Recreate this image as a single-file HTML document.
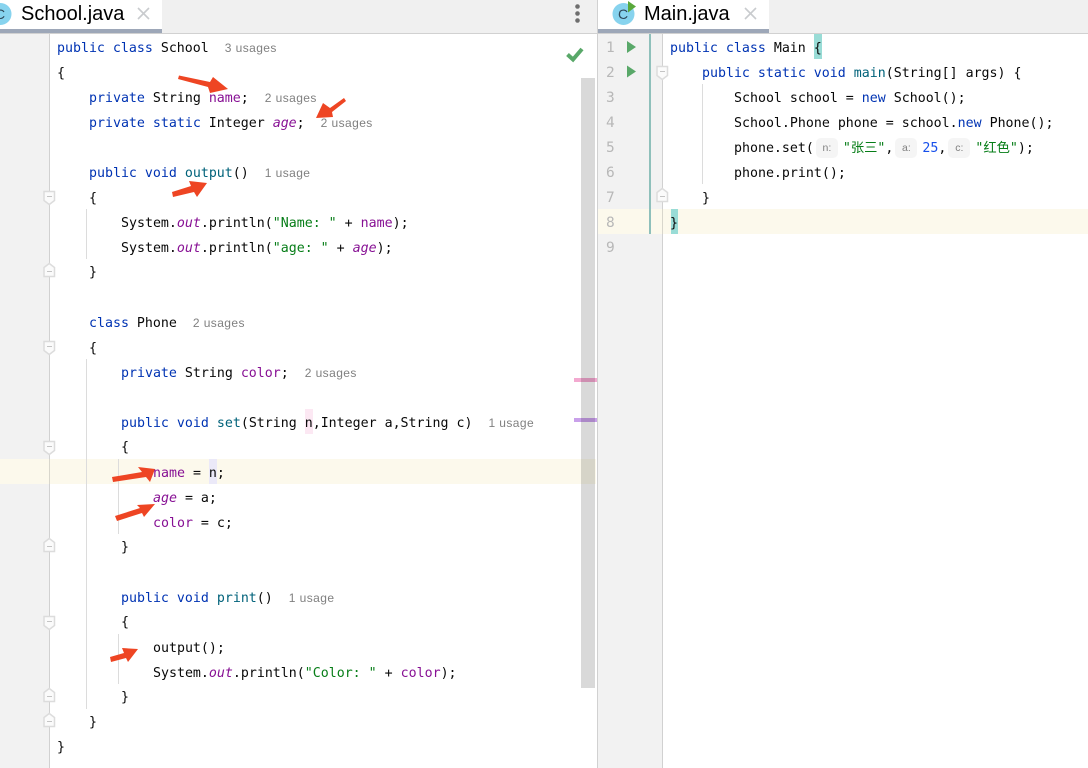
<!DOCTYPE html>
<html><head><meta charset="utf-8"><style>
html,body{margin:0;padding:0;width:1088px;height:768px;overflow:hidden;background:#fff}
.a{position:absolute}
.l{position:absolute;margin-top:1px;height:25px;line-height:25px;white-space:pre;font-family:"DejaVu Sans Mono","Noto Sans CJK SC",monospace;font-size:13.28px;color:#080808}
.k{color:#0033b3}.f{color:#00627a}.v{color:#871094}.i{font-style:italic}.s{color:#067d17}.n{color:#1750eb}
.u{font-family:"Liberation Sans",sans-serif;font-size:12px;color:#808080;letter-spacing:.42px;margin-left:8px}
.p{display:inline-block;font-family:"Liberation Sans",sans-serif;font-size:10.5px;line-height:20px;height:20px;width:22px;text-align:center;background:#f5f5f5;color:#808080;border-radius:5px;vertical-align:middle;margin:0 5px 1px 2px}
.t{font-family:"Liberation Sans",sans-serif;font-size:20px;color:#000}
.g{position:absolute;margin-top:1px;font-family:"DejaVu Sans Mono",monospace;font-size:14.5px;color:#b8b8b8;line-height:25px;height:25px}
</style></head><body>
<div class="a" style="left:0;top:0;width:1088px;height:33px;background:#f0f0f0"></div>
<div class="a" style="left:0;top:33px;width:1088px;height:1px;background:#d1d1d1"></div>
<div class="a" style="left:0;top:0;width:162px;height:29px;background:#fff"></div>
<div class="a" style="left:0;top:29px;width:162px;height:4px;background:#9da7b8"></div>
<div class="a" style="left:598px;top:0;width:171px;height:29px;background:#fff"></div>
<div class="a" style="left:598px;top:29px;width:171px;height:4px;background:#9da7b8"></div>

<div class="a" style="left:0;top:34px;width:49px;height:734px;background:#f2f2f2"></div>
<div class="a" style="left:49px;top:34px;width:1px;height:734px;background:#d1d1d1"></div>
<div class="a" style="left:598px;top:34px;width:64px;height:734px;background:#f2f2f2"></div>
<div class="a" style="left:597px;top:0;width:1px;height:768px;background:#d1d1d1"></div>
<div class="a" style="left:662px;top:34px;width:1px;height:734px;background:#d1d1d1"></div>

<div class="a" style="left:0;top:459px;width:596px;height:25px;background:#fcf9ec"></div>
<div class="a" style="left:598px;top:209px;width:490px;height:25px;background:#fcf9ec"></div>
<div class="a" style="left:49px;top:459px;width:1px;height:25px;background:#d8d6cc"></div>
<div class="a" style="left:649px;top:34px;width:2px;height:200px;background:#8fc0bb"></div>
<div class="a" style="left:662px;top:209px;width:1px;height:25px;background:#d8d6cc"></div>

<div class="a" style="left:814px;top:34px;width:8px;height:25px;background:#99dcd6"></div>
<div class="a" style="left:671px;top:209px;width:7px;height:25px;background:#99dcd6"></div>
<div class="a" style="left:305px;top:409px;width:8px;height:25px;background:#fce8f3"></div>
<div class="a" style="left:209px;top:459px;width:8px;height:25px;background:#ebe9f8"></div>

<div class="a" style="left:86px;top:209px;width:1px;height:50px;background:#dcdcdc"></div>
<div class="a" style="left:86px;top:359px;width:1px;height:350px;background:#dcdcdc"></div>
<div class="a" style="left:118px;top:459px;width:1px;height:75px;background:#dcdcdc"></div>
<div class="a" style="left:118px;top:634px;width:1px;height:50px;background:#dcdcdc"></div>
<div class="a" style="left:702px;top:84px;width:1px;height:100px;background:#dcdcdc"></div>

<div class="a" style="left:574px;top:378px;width:23px;height:4px;background:#f3a9d0"></div>
<div class="a" style="left:574px;top:418px;width:23px;height:4px;background:#c9a0ea"></div>
<div class="a" style="left:581px;top:78px;width:14px;height:610px;background:rgba(0,0,0,.15)"></div>

<svg class="a" style="left:0;top:0" width="1088" height="768" viewBox="0 0 1088 768">
<circle cx="0.500" cy="14" r="11" fill="#87d3ee"/>
<circle cx="623.500" cy="14" r="11" fill="#87d3ee"/>
<path d="M628 1l8 5.500-8 6z" fill="#59a83b"/>
<circle cx="577.500" cy="6.500" r="2.300" fill="#6e6e6e"/><circle cx="577.500" cy="13.500" r="2.300" fill="#6e6e6e"/><circle cx="577.500" cy="20.500" r="2.300" fill="#6e6e6e"/>
<path d="M138 8l11 11M149 8l-11 11M745 8l11 11M756 8l-11 11" stroke="#c9cbce" stroke-width="1.600" fill="none"/>
<path d="M567.500 54.500l5.500 5 9-10.500" stroke="#59a869" stroke-width="4" fill="none"/>
<path d="M627 41l9 6-9 6zM627 65.500l9 6-9 6z" fill="#59a869"/>
<g fill="#fbfbfb" stroke="#dcdcdc" stroke-width="1.500">
<path d="M44 191.500h10.500v9l-5.250 4-5.250-4z"/><path d="M44 276.500h10.500v-9l-5.250-4-5.250 4z"/>
<path d="M44 341.500h10.500v9l-5.250 4-5.250-4z"/><path d="M44 441.500h10.500v9l-5.250 4-5.250-4z"/>
<path d="M44 551.500h10.500v-9l-5.250-4-5.250 4z"/><path d="M44 616.500h10.500v9l-5.250 4-5.250-4z"/>
<path d="M44 701.500h10.500v-9l-5.250-4-5.250 4z"/><path d="M44 726.500h10.500v-9l-5.250-4-5.250 4z"/>
<path d="M657 66.500h10.500v9l-5.250 4-5.250-4z"/><path d="M657 201.500h10.500v-9l-5.250-4-5.250 4z"/>
</g>
<path d="M47 196.500h5M47 271.500h5M47 346.500h5M47 446.500h5M47 546.500h5M47 621.500h5M47 696.500h5M47 721.500h5M660 71.500h5M660 196.500h5" stroke="#c4c4c4" fill="none"/>
<g fill="#ee4523">
<polygon points="179,75.500 210,82 213,77 228,89 210,93 208,87 178,79"/>
<polygon points="344,98 330,108 323,103 316,118 333,117 332,112 346,101"/>
<polygon points="172,192 191,186 189,181 207,183 197,197 194,192 173,197"/>
<polygon points="112,477 142,472 138,467 155,469 150,482 146,477 113,482"/>
<polygon points="115,516 140,508 137,505 155,504 144,517 142,513 117,521"/>
<polygon points="110,657 124,653 122,648 138,649 128,662 126,658 111,662"/>
</g>
</svg>
<div class="a" style="left:-5px;top:6px;width:12px;font:14px 'Liberation Sans',sans-serif;color:#2f4858">C</div>
<div class="a" style="left:618px;top:6px;font:14px 'Liberation Sans',sans-serif;color:#2f4858">C</div>
<div class="a t" style="left:21px;top:3px">School.java</div>
<div class="a t" style="left:644px;top:3px">Main.java</div>

<div class="g" style="left:606px;top:35px">1</div><div class="g" style="left:606px;top:60px">2</div><div class="g" style="left:606px;top:85px">3</div><div class="g" style="left:606px;top:110px">4</div><div class="g" style="left:606px;top:135px">5</div><div class="g" style="left:606px;top:160px">6</div><div class="g" style="left:606px;top:185px">7</div><div class="g" style="left:606px;top:210px">8</div><div class="g" style="left:606px;top:235px">9</div>

<div class="l" style="left:57px;top:35px"><span class="k">public class</span> School <span class="u">3 usages</span></div>
<div class="l" style="left:57px;top:60px">{</div>
<div class="l" style="left:89px;top:85px"><span class="k">private</span> String <span class="v">name</span>; <span class="u">2 usages</span></div>
<div class="l" style="left:89px;top:110px"><span class="k">private static</span> Integer <span class="v i">age</span>; <span class="u">2 usages</span></div>
<div class="l" style="left:89px;top:160px"><span class="k">public void</span> <span class="f">output</span>() <span class="u">1 usage</span></div>
<div class="l" style="left:89px;top:185px">{</div>
<div class="l" style="left:121px;top:210px">System.<span class="v i">out</span>.println(<span class="s">"Name: "</span> + <span class="v">name</span>);</div>
<div class="l" style="left:121px;top:235px">System.<span class="v i">out</span>.println(<span class="s">"age: "</span> + <span class="v i">age</span>);</div>
<div class="l" style="left:89px;top:259px">}</div>
<div class="l" style="left:89px;top:310px"><span class="k">class</span> Phone <span class="u">2 usages</span></div>
<div class="l" style="left:89px;top:335px">{</div>
<div class="l" style="left:121px;top:360px"><span class="k">private</span> String <span class="v">color</span>; <span class="u">2 usages</span></div>
<div class="l" style="left:121px;top:410px"><span class="k">public void</span> <span class="f">set</span>(String n,Integer a,String c) <span class="u">1 usage</span></div>
<div class="l" style="left:121px;top:434px">{</div>
<div class="l" style="left:153px;top:460px"><span class="v">name</span> = n;</div>
<div class="l" style="left:153px;top:485px"><span class="v i">age</span> = a;</div>
<div class="l" style="left:153px;top:510px"><span class="v">color</span> = c;</div>
<div class="l" style="left:121px;top:534px">}</div>
<div class="l" style="left:121px;top:585px"><span class="k">public void</span> <span class="f">print</span>() <span class="u">1 usage</span></div>
<div class="l" style="left:121px;top:609px">{</div>
<div class="l" style="left:153px;top:635px">output();</div>
<div class="l" style="left:153px;top:660px">System.<span class="v i">out</span>.println(<span class="s">"Color: "</span> + <span class="v">color</span>);</div>
<div class="l" style="left:121px;top:684px">}</div>
<div class="l" style="left:89px;top:709px">}</div>
<div class="l" style="left:57px;top:734px">}</div>

<div class="l" style="left:670px;top:35px"><span class="k">public class</span> Main {</div>
<div class="l" style="left:702px;top:60px"><span class="k">public static void</span> <span class="f">main</span>(String[] args) {</div>
<div class="l" style="left:734px;top:85px">School school = <span class="k">new</span> School();</div>
<div class="l" style="left:734px;top:110px">School.Phone phone = school.<span class="k">new</span> Phone();</div>
<div class="l" style="left:734px;top:135px">phone.set(<span class="p">n:</span><span class="s">"张三"</span>,<span class="p">a:</span><span class="n">25</span>,<span class="p">c:</span><span class="s">"红色"</span>);</div>
<div class="l" style="left:734px;top:160px">phone.print();</div>
<div class="l" style="left:702px;top:185px">}</div>
<div class="l" style="left:670px;top:210px">}</div>
</body></html>
